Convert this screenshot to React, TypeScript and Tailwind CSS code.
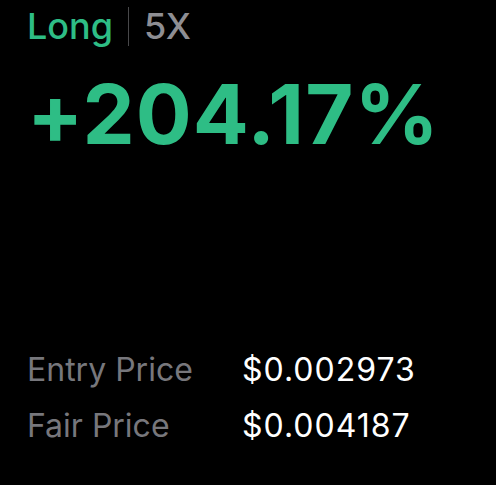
export default function App() {
  return (
    <div className="w-[496px] h-[485px] bg-black font-['Inter',sans-serif] pl-[27px] pt-[8px] overflow-hidden">
      <div className="flex items-center h-[36px]">
        <span className="text-[#2ebd85] text-[36px] font-medium leading-none">Long</span>
        <span className="w-px h-[39px] bg-[#48484a] mx-[15px]" />
        <span className="text-[#8e8e93] text-[36px] font-medium leading-none tracking-[-0.5px]">5X</span>
      </div>
      <div className="mt-[29px] text-[#2ebd85] text-[83px] font-bold leading-none tracking-[1px]">
        +204.17%
      </div>
      <div className="mt-[198px] flex flex-col gap-[24px] text-[32px] leading-none">
        <div className="flex">
          <span className="w-[215px] text-[#77777c]">Entry Price</span>
          <span className="text-white tracking-[1px]">$0.002973</span>
        </div>
        <div className="flex">
          <span className="w-[215px] text-[#77777c]">Fair Price</span>
          <span className="text-white tracking-[1px]">$0.004187</span>
        </div>
      </div>
    </div>
  );
}
